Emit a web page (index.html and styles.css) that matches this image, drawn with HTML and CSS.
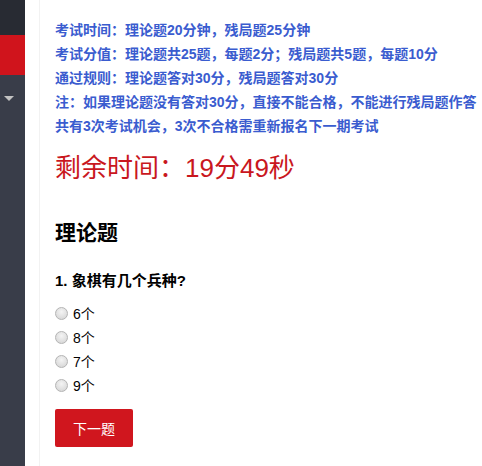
FILE: index.html
```html
<!DOCTYPE html>
<html lang="zh-CN">
<head>
<meta charset="utf-8">
<title>考试</title>
<link rel="stylesheet" href="styles.css">
</head>
<body>
<div class="layout">
  <aside class="side">
    <div class="side-top"></div>
    <div class="side-active"></div>
    <div class="side-rest"><span class="caret"></span></div>
  </aside>
  <div class="gutter"></div>
  <main class="content">
    <div class="rules">
      <p>考试时间：理论题20分钟，残局题25分钟</p>
      <p>考试分值：理论题共25题，每题2分；残局题共5题，每题10分</p>
      <p>通过规则：理论题答对30分，残局题答对30分</p>
      <p>注：如果理论题没有答对30分，直接不能合格，不能进行残局题作答</p>
      <p>共有3次考试机会，3次不合格需重新报名下一期考试</p>
    </div>
    <div class="timer">剩余时间：19分49秒</div>
    <h2 class="section-title">理论题</h2>
    <div class="question">1. 象棋有几个兵种?</div>
    <form class="options">
      <label class="option"><input type="radio" name="q1" class="radio"><span>6个</span></label>
      <label class="option"><input type="radio" name="q1" class="radio"><span>8个</span></label>
      <label class="option"><input type="radio" name="q1" class="radio"><span>7个</span></label>
      <label class="option"><input type="radio" name="q1" class="radio"><span>9个</span></label>
    </form>
    <button class="next-btn" type="button">下一题</button>
  </main>
</div>
</body>
</html>
```
FILE: styles.css
```css
html, body {
  margin: 0;
  padding: 0;
  background: #fff;
}
body {
  font-family: "Liberation Sans", "Noto Sans CJK SC", sans-serif;
  color: #000;
  width: 482px;
  height: 466px;
  overflow: hidden;
}
.layout {
  display: flex;
  height: 466px;
}
.side {
  width: 25px;
  flex: none;
  display: flex;
  flex-direction: column;
}
.side-top {
  height: 35px;
  background: #282b33;
}
.side-active {
  height: 40px;
  background: #d0141c;
}
.side-rest {
  flex: 1;
  background: #393d49;
  padding-top: 21px;
  padding-left: 4px;
}
.caret {
  display: block;
  width: 0;
  height: 0;
  border-left: 5px solid transparent;
  border-right: 5px solid transparent;
  border-top: 5px solid #c2c2c2;
}
.gutter {
  width: 14px;
  flex: none;
}
.content {
  flex: 1;
  border-left: 1px solid #f2f2f2;
  padding-left: 15px;
  display: flex;
  flex-direction: column;
  align-items: flex-start;
  white-space: nowrap;
}
.rules {
  margin-top: 18px;
  color: #3a5ccf;
  font-size: 14px;
  font-weight: bold;
  line-height: 24px;
}
.rules p {
  margin: 0;
}
.timer {
  margin-top: 12px;
  color: #c9171e;
  font-size: 26px;
  line-height: 36px;
}
.section-title {
  margin: 32px 0 0;
  font-size: 21px;
  line-height: 30px;
  font-weight: bold;
}
.question {
  margin-top: 21px;
  font-size: 15px;
  line-height: 24px;
  font-weight: bold;
}
.options {
  margin-top: 8px;
  display: flex;
  flex-direction: column;
}
.option {
  display: flex;
  align-items: center;
  height: 24px;
  font-size: 14px;
}
.radio {
  appearance: none;
  -webkit-appearance: none;
  width: 13px;
  height: 13px;
  margin: 0 5px 0 0;
  border-radius: 50%;
  border: 1px solid #b4b4b4;
  background: radial-gradient(circle at 50% 35%, #f4f4f4 0%, #dcdcdc 70%, #cfcfcf 100%);
  box-sizing: border-box;
}
.next-btn {
  margin-top: 12px;
  width: 78px;
  height: 38px;
  border: none;
  border-radius: 2px;
  background: #d0161e;
  color: #fff;
  font-family: "Liberation Sans", "Noto Sans CJK SC", sans-serif;
  font-size: 14px;
  padding: 0;
}
```
